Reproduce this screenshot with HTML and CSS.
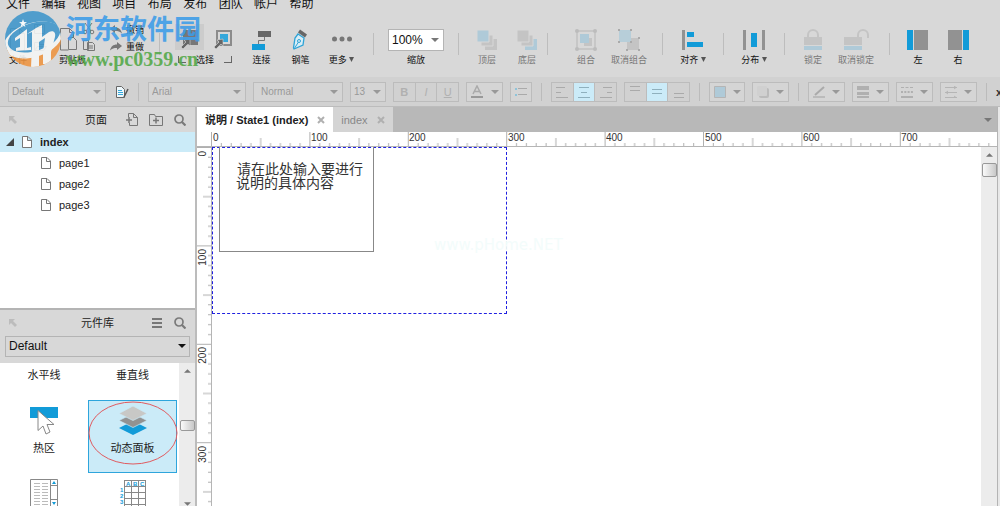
FILE: index.html
```html
<!DOCTYPE html>
<html lang="zh-CN">
<head>
<meta charset="utf-8">
<title>说明 / State1 (index)</title>
<link rel="stylesheet" href="styles.css">
</head>
<body>
<svg class="defs" width="0" height="0" aria-hidden="true">
  <defs>
    <symbol id="page" viewBox="0 0 10 12"><path d="M.5.5h5.5l3.500 3.500v7.500h-9zM5.500.5v4h4" fill="#fff" stroke="#777"/></symbol>
    <symbol id="caret" viewBox="0 0 8 4"><path d="M0 0h8l-4 4z" fill="currentColor"/></symbol>
    <symbol id="search" viewBox="0 0 12 12"><circle cx="5" cy="5" r="4" fill="none" stroke="#7a7a7a" stroke-width="1.700"/><path d="M8 8l3.500 3.500" stroke="#7a7a7a" stroke-width="2.200"/></symbol>
    <symbol id="dock" viewBox="0 0 8 8"><path d="M0 0h6L4 2l4 4-2 2-4-4-2 2z" fill="#bcbcbc"/></symbol>
    <symbol id="close" viewBox="0 0 8 8"><path d="M1 1l6 6M7 1L1 7" stroke="#b0b0b0" stroke-width="2"/></symbol>
  </defs>
</svg>

<nav class="menu">
  <a href="#">文件</a><a href="#">编辑</a><a href="#">视图</a><a href="#">项目</a><a href="#">布局</a><a href="#">发布</a><a href="#">团队</a><a href="#">帐户</a><a href="#">帮助</a>
</nav>

<div class="toolbar">
  <button class="tool file">
    <svg width="38" height="32" viewBox="0 0 38 32" fill="none" stroke="#888"><path d="M1.500 9.500h9l5 5v17h-14zM10.500 9.500v5h5M25.500 5.500h10v9h-10zM28.500 5.500v3h5v-3M25.500 31.500v-8h4l1 2h5v2M25.500 31.500l3-4h9l-3 4z"/></svg>
    <span>文件</span>
  </button>
  <button class="tool clip">
    <svg width="36" height="32" viewBox="0 0 36 32" fill="none" stroke="#777"><path d="M9.500 31H1.500V9.500h9l4 4V19M10.500 9.500v4h4M9.500 18.500h5l3 3v9h-8z"/><path d="M26 4l6 8M33 4l-6 8M24.500 21.500h5v9h-5zM28.500 23.500h5l2 2v6h-7zM30 27h4M30 29h4"/><circle cx="26" cy="13" r="1.800"/><circle cx="33" cy="13" r="1.800"/></svg>
    <span>剪贴板</span>
  </button>
  <div class="history">
    <button><svg width="12" height="10" viewBox="0 0 12 10"><path d="M0 4l5-4v2.500c4 0 6 2 7 6-2-2-4-2.500-7-2.500V8z" fill="#777"/></svg><span>撤销</span></button>
    <button><svg width="12" height="10" viewBox="0 0 12 10"><path d="M12 4L7 0v2.500c-4 0-6 2-7 6 2-2 4-2.500 7-2.500V8z" fill="#777"/></svg><span>重做</span></button>
  </div>
  <i class="sep"></i>
  <button class="tool pick">
    <svg width="60" height="28" viewBox="0 0 60 28"><path d="M0 1h29v26H0z" fill="#ccc"/><path d="M8 7h15v15H8z" fill="#777"/><path d="M8 15h15" stroke="#bbb"/><path d="M42 8h14v14H42z" fill="#d8d8d8" stroke="#8b8b8b" stroke-width="2"/><path d="M45 11h8v8h-8z" fill="#35a8db"/><path d="M15 16v7l-2-2-5 5-2-2 5-5-2-2zM48 16v7l-2-2-5 5-2-2 5-5-2-2z" fill="#666" stroke="#d8d8d8" stroke-width=".6"/></svg>
    <span class="bracket">选择</span>
  </button>
  <button class="tool w39">
    <svg width="20" height="22" viewBox="0 0 20 22"><path d="M6 2h13v6H6z" fill="#666"/><path d="M0 15h13v6H0z" fill="#129bd8"/><path d="M12.500 8v3.500h-6V15" fill="none" stroke="#777"/></svg>
    <span>连接</span>
  </button>
  <button class="tool w39">
    <svg width="18" height="22" viewBox="0 0 18 22"><path d="M6 5l6 4-1 7-9 4-.500-1L3 9z" fill="#d8eef7" stroke="#2fa3d6" stroke-width="1.300"/><path d="M2 20l4.500-7" stroke="#2fa3d6"/><circle cx="7" cy="12" r="1.500" fill="#d8eef7" stroke="#2fa3d6"/><path d="M7 2l7 5" stroke="#666" stroke-width="3.500"/></svg>
    <span>钢笔</span>
  </button>
  <button class="tool w43">
    <svg width="20" height="22" viewBox="0 0 20 22" fill="#777"><circle cx="2.500" cy="10" r="2.500"/><circle cx="10" cy="10" r="2.500"/><circle cx="17.500" cy="10" r="2.500"/></svg>
    <span>更多 <svg class="drop" width="5" height="5" viewBox="0 0 5 5"><path d="M0 0h5L2.500 5z" fill="#555"/></svg></span>
  </button>
  <i class="sep gap"></i>
  <label class="tool w84 zoom">
    <span class="pickbox"><select><option>100%</option></select><svg width="8" height="4"><use href="#caret"/></svg></span>
    <span>缩放</span>
  </label>
  <i class="sep"></i>
  <button class="tool w40 off lead">
    <svg width="20" height="22" viewBox="0 0 20 22"><path d="M8 10h12v11H8z" fill="#c4c4c4"/><path d="M4 6h12v11H4z" fill="#c4c4c4" stroke="#d8d8d8"/><path d="M0 1h12v12H0z" fill="#afcad8" stroke="#d8d8d8"/></svg>
    <span>顶层</span>
  </button>
  <button class="tool w40 off">
    <svg width="20" height="22" viewBox="0 0 20 22"><path d="M8 10h12v11H8z" fill="#afcad8"/><path d="M4 6h12v11H4z" fill="#c4c4c4" stroke="#d8d8d8"/><path d="M0 1h12v12H0z" fill="#c4c4c4" stroke="#d8d8d8"/></svg>
    <span>底层</span>
  </button>
  <i class="sep"></i>
  <button class="tool w40 off gap">
    <svg width="22" height="22" viewBox="0 0 22 22"><path d="M2 2h18v18H2z" fill="none" stroke="#c1c1c1" stroke-width="1.500"/><g fill="#bcbcbc"><circle cx="2" cy="2" r="2"/><circle cx="20" cy="2" r="2"/><circle cx="2" cy="20" r="2"/><circle cx="20" cy="20" r="2"/></g><path d="M9 9h8v8H9z" fill="#c4c4c4"/><path d="M5 5h9v9H5z" fill="#afcad8"/></svg>
    <span>组合</span>
  </button>
  <button class="tool w46 off">
    <svg width="22" height="22" viewBox="0 0 22 22"><path d="M9 9h12v12H9z" fill="#c4c4c4"/><path d="M1 1h12v12H1z" fill="#b7ced9"/><path d="M0 0h2v2H0zM12 0h2v2h-2zM0 12h2v2H0zM12 12h2v2h-2zM20 8h2v2h-2zM8 20h2v2H8zM20 20h2v2h-2z" fill="#aaa"/></svg>
    <span>取消组合</span>
  </button>
  <i class="sep gap"></i>
  <button class="tool w60">
    <svg width="22" height="22" viewBox="0 0 22 22"><path d="M0 1h3v20H0z" fill="#929292"/><path d="M5 3h7v5H5zM5 13h16v5H5z" fill="#129bd8"/></svg>
    <span>对齐 <svg class="drop" width="5" height="5" viewBox="0 0 5 5"><path d="M0 0h5L2.500 5z" fill="#555"/></svg></span>
  </button>
  <i class="sep"></i>
  <button class="tool w60">
    <svg width="22" height="22" viewBox="0 0 22 22"><path d="M0 1h3v20H0zM19 1h3v20h-3z" fill="#929292"/><path d="M8 4h6v14H8z" fill="#129bd8"/></svg>
    <span>分布 <svg class="drop" width="5" height="5" viewBox="0 0 5 5"><path d="M0 0h5L2.500 5z" fill="#555"/></svg></span>
  </button>
  <i class="sep"></i>
  <button class="tool w40 off lead">
    <svg width="18" height="22" viewBox="0 0 18 22"><path d="M4 9V6a5 5 0 0 1 10 0v3" fill="none" stroke="#c4c4c4" stroke-width="2"/><path d="M0 8h18v8H0z" fill="#c4c4c4"/><path d="M0 17h18v4H0z" fill="#afcad8"/></svg>
    <span>锁定</span>
  </button>
  <button class="tool w46 off">
    <svg width="26" height="22" viewBox="0 0 26 22"><path d="M15 9V6a5 5 0 0 1 10 0v3" fill="none" stroke="#c4c4c4" stroke-width="2"/><path d="M1 8h18v8H1z" fill="#c4c4c4"/><path d="M1 17h18v4H1z" fill="#afcad8"/></svg>
    <span>取消锁定</span>
  </button>
  <i class="sep gap"></i>
  <button class="tool w40 lead">
    <svg width="22" height="22" viewBox="0 0 22 22"><path d="M0 1h6v20H0z" fill="#129bd8"/><path d="M7 1h14v20H7z" fill="#929292"/></svg>
    <span>左</span>
  </button>
  <button class="tool w40">
    <svg width="22" height="22" viewBox="0 0 22 22"><path d="M16 1h6v20h-6z" fill="#129bd8"/><path d="M1 1h14v20H1z" fill="#929292"/></svg>
    <span>右</span>
  </button>
  <div class="mark" aria-hidden="true">
    <svg width="60" height="60" viewBox="0 0 60 60">
      <clipPath id="disc"><circle cx="29" cy="30" r="28"/></clipPath>
      <g clip-path="url(#disc)">
        <path d="M0 0h60v30L0 44z" fill="#3e96cb"/>
        <path d="M0 40l60-14v34H0z" fill="#ee9440"/>
        <ellipse cx="29" cy="31" rx="30" ry="17" transform="rotate(-17 29 31)" fill="#f5f6f5"/>
        <ellipse cx="30" cy="28" rx="27" ry="14" transform="rotate(-17 30 28)" fill="#3e96cb"/>
        <path d="M11 29l12-9v19l4-1v3l-15 1v-3l4-1V29l-5 3z" fill="#f5f6f5"/>
        <path d="M32 19l6-3v12l7-5c5-2 7 1 6 5l-4 15v12h-8V43l2-14-6 4v25h-8l1-22V23l-5 2z" fill="#f5f6f5"/>
      </g>
      <path d="M19 10l1 3 3 .2-2.500 1.800.9 3-2.400-1.800-2.400 1.800.9-3L15 13.200l3-.2z" fill="#fff"/>
    </svg>
    <div class="markText"><strong>河东软件园</strong><em>www.pc0359.cn</em></div>
  </div>
</div>

<div class="format">
  <span class="pickbox w98"><select aria-label="样式" disabled><option>Default</option></select><svg width="8" height="4"><use href="#caret"/></svg></span>
  <button class="styleEdit" aria-label="编辑样式"><svg width="14" height="14" viewBox="0 0 14 14"><path d="M1.500 1.500h5l3 3v8h-8z" fill="#eef8fc" stroke="#666"/><path d="M3 5.500h4M3 7.500h5M3 9.500h5" stroke="#35a8db"/><path d="M13 4l-4 8" stroke="#555" stroke-width="1.500"/></svg></button>
  <i class="bar"></i>
  <span class="pickbox w98"><select aria-label="字体" disabled><option>Arial</option></select><svg width="8" height="4"><use href="#caret"/></svg></span>
  <span class="pickbox w90"><select aria-label="字形" disabled><option>Normal</option></select><svg width="8" height="4"><use href="#caret"/></svg></span>
  <span class="pickbox w36"><select aria-label="字号" disabled><option>13</option></select><svg width="8" height="4"><use href="#caret"/></svg></span>
  <div class="seg"><button><b>B</b></button><button><em>I</em></button><button><u>U</u></button></div>
  <button class="opt w37"><svg width="14" height="14" viewBox="0 0 14 14"><path d="M3 9l4-8 4 8M4.500 6.500h5" fill="none" stroke="#aaa" stroke-width="1.500"/><path d="M1 11h12v2H1z" fill="#999"/></svg><svg width="8" height="4"><use href="#caret"/></svg></button>
  <button class="opt w22"><svg width="12" height="10" viewBox="0 0 12 10"><path d="M0 2h2M0 8h2" stroke="#8fc4da" stroke-width="2"/><path d="M3 1.500h9M3 7.500h9" stroke="#aaa"/></svg></button>
  <i class="bar"></i>
  <div class="seg">
    <button><svg width="12" height="12" viewBox="0 0 12 12" stroke="#aaa"><path d="M0 1.500h9M0 6.500h5M0 11.500h12"/></svg></button>
    <button class="on"><svg width="12" height="12" viewBox="0 0 12 12" stroke="#8fb0bd"><path d="M1 1.500h10M3 6.500h6M0 11.500h12"/></svg></button>
    <button><svg width="12" height="12" viewBox="0 0 12 12" stroke="#aaa"><path d="M3 1.500h9M7 6.500h5M0 11.500h12"/></svg></button>
  </div>
  <div class="seg">
    <button><svg width="10" height="14" viewBox="0 0 10 14" stroke="#aaa"><path d="M0 1.500h10M0 5.500h10"/></svg></button>
    <button class="on"><svg width="10" height="14" viewBox="0 0 10 14" stroke="#8fb0bd"><path d="M0 4.500h10M0 8.500h10"/></svg></button>
    <button><svg width="10" height="14" viewBox="0 0 10 14" stroke="#aaa"><path d="M0 8.500h10M0 12.500h10"/></svg></button>
  </div>
  <i class="bar"></i>
  <button class="opt w36"><svg width="12" height="12" viewBox="0 0 12 12"><path d="M.5.5h11v11H.5z" fill="#afcad8" stroke="#b5b5b5"/></svg><svg width="8" height="4"><use href="#caret"/></svg></button>
  <button class="opt w37"><svg width="12" height="12" viewBox="0 0 12 12"><rect x="2" y="2" width="10" height="10" rx="2" fill="#bbb"/><rect width="10" height="10" rx="1" fill="#d0d0d0"/></svg><svg width="8" height="4"><use href="#caret"/></svg></button>
  <i class="bar"></i>
  <button class="opt w37"><svg width="12" height="12" viewBox="0 0 12 12"><path d="M2 9l9-8" stroke="#aaa" stroke-width="2"/><path d="M0 11h12" stroke="#bbb" stroke-width="2"/></svg><svg width="8" height="4"><use href="#caret"/></svg></button>
  <button class="opt w37"><svg width="12" height="12" viewBox="0 0 12 12" stroke="#b0b0b0"><path d="M0 2h12" stroke-width="4"/><path d="M0 7.500h12" stroke-width="3"/><path d="M0 11h12" stroke-width="2"/></svg><svg width="8" height="4"><use href="#caret"/></svg></button>
  <button class="opt w37"><svg width="12" height="12" viewBox="0 0 12 12" stroke="#b0b0b0"><path d="M0 1.500h12" stroke-dasharray="3 1.500"/><path d="M0 6h12" stroke-width="2" stroke-dasharray="2 1.300"/><path d="M0 11h12" stroke-width="2"/></svg><svg width="8" height="4"><use href="#caret"/></svg></button>
  <button class="opt w37"><svg width="12" height="12" viewBox="0 0 12 12" stroke="#b5b5b5" fill="none"><path d="M0 1.500h12M0 6.500h12M0 11.500h12M9 0l2 1.500L9 3M3 5L1 6.500 3 8M9 10l2 1.500"/></svg><svg width="8" height="4"><use href="#caret"/></svg></button>
  <i class="bar"></i>
  <b class="axis">x</b>
</div>

<div class="work">
  <aside class="side">
    <section class="pages">
      <header class="head">
        <svg width="8" height="8"><use href="#dock"/></svg>
        <h2>页面</h2>
        <button aria-label="添加页面"><svg width="12" height="13" viewBox="0 0 12 13" fill="none" stroke="#777"><path d="M2.500 4V.5h5l4 4v8h-8V10M7.500.5v4h4"/><path d="M0 7h6M3 4v6" stroke-width="1.500"/></svg></button>
        <button aria-label="添加文件夹"><svg width="14" height="13" viewBox="0 0 14 13" fill="none" stroke="#777"><path d="M.5 12.500V1.500h5l1 2h7v9z"/><path d="M4 7.500h6M7 4.500v6" stroke-width="1.500"/></svg></button>
        <button aria-label="搜索页面"><svg width="12" height="12"><use href="#search"/></svg></button>
      </header>
      <ul class="tree">
        <li class="root"><svg width="8" height="8" viewBox="0 0 8 8"><path d="M8 0v8H0z" fill="#444"/></svg><svg width="10" height="12"><use href="#page"/></svg>index</li>
        <li><svg width="10" height="12"><use href="#page"/></svg>page1</li>
        <li><svg width="10" height="12"><use href="#page"/></svg>page2</li>
        <li><svg width="10" height="12"><use href="#page"/></svg>page3</li>
      </ul>
    </section>
    <section class="library">
      <header class="head">
        <svg width="8" height="8"><use href="#dock"/></svg>
        <h2>元件库</h2>
        <button aria-label="菜单"><svg width="12" height="12" viewBox="0 0 12 12" stroke="#777" stroke-width="2"><path d="M1 2h10M1 6h10M1 10h10"/></svg></button>
        <button aria-label="搜索元件"><svg width="12" height="12"><use href="#search"/></svg></button>
      </header>
      <div class="libPick"><span class="pickbox"><select aria-label="元件库"><option>Default</option></select><svg width="8" height="4"><use href="#caret"/></svg></span></div>
      <div class="shelf">
        <div class="widgets">
          <div class="widget top">水平线</div>
          <div class="widget top">垂直线</div>
          <div class="widget"><svg width="28" height="30" viewBox="0 0 28 30"><path d="M0 2h28v11H0z" fill="#129bd8"/><path d="M8 5.500v20l5-4.500 3 8 4-2-3-7.500h7z" fill="#fff" stroke="#888"/></svg>热区</div>
          <div class="widget chosen"><svg width="28" height="30" viewBox="0 0 28 30"><path d="M14 16l14 7-14 7-14-7z" fill="#129bd8"/><path d="M14 8.500l14 7-14 7-14-7z" fill="#929292" stroke="#cbebf8" stroke-width=".7"/><path d="M14 1l14 7.500-14 7-14-7z" fill="#c8c8c6" stroke="#cbebf8" stroke-width=".7"/></svg>动态面板
            <svg class="ring" viewBox="0 0 90 64"><ellipse cx="45" cy="32" rx="44" ry="31" fill="none" stroke="#e05b60"/></svg>
          </div>
          <div class="widget"><svg width="28" height="30" viewBox="0 0 28 30"><path d="M.5 1.500h27V32H.5zM20.500 1.500V32" fill="#fff" stroke="#888"/><path d="M4 5.500h6m2 0h6M4 8.500h6m2 0h6M4 11.500h6m2 0h6M4 14.500h6m2 0h6M4 17.500h6m2 0h6M4 20.500h6m2 0h6M4 23.500h6m2 0h6M4 26.500h6m2 0h6" stroke="#bbb"/><path d="M21 7.500h6M21 21.500h6" stroke="#888"/><path d="M22 6l2-3 2 3zM22 24h4l-2 3z" fill="#129bd8"/></svg></div>
          <div class="widget"><svg width="28" height="30" viewBox="0 0 28 30"><path d="M6 2.500h21M6 8.500h21M6 14.500h21M6 20.500h21M6 26.500h21M5.500 2v28M12.500 2v28M19.500 2v28M26.500 2v28" stroke="#888"/><g class="cellText"><text x="7" y="8">A</text><text x="14" y="8">B</text><text x="21" y="8">C</text><text x="1" y="14">1</text><text x="1" y="20">2</text><text x="1" y="26">3</text></g></svg></div>
        </div>
        <div class="scroll"><svg width="7" height="4" viewBox="0 0 8 4"><path d="M0 4h8L4 0z" fill="#777"/></svg><i class="thumb"></i><svg width="7" height="4"><use href="#caret"/></svg></div>
      </div>
    </section>
  </aside>

  <main class="editor">
    <div class="tabs">
      <button class="tab current">说明 / State1 (index)<svg width="8" height="8"><use href="#close"/></svg></button>
      <button class="tab">index<svg width="8" height="8"><use href="#close"/></svg></button>
      <svg class="more" width="8" height="4"><use href="#caret"/></svg>
    </div>
    <svg class="rulerX" aria-label="水平标尺">
      <defs><pattern id="tx" x="14" width="98.400" height="15" patternUnits="userSpaceOnUse"><path d="M.5 0v15M49.700 6v9M10.300 11v4M20.200 11v4M30 11v4M39.900 11v4M59.500 11v4M69.400 11v4M79.200 11v4M89.100 11v4" stroke="#b0b0b0"/></pattern></defs>
      <rect x="14" width="100%" height="15" fill="url(#tx)"/>
      <path d="M0 14.500h2000" stroke="#b5b5b5"/>
      <text x="16" y="9">0</text><text x="114" y="9">100</text><text x="212" y="9">200</text><text x="311" y="9">300</text><text x="409" y="9">400</text><text x="508" y="9">500</text><text x="606" y="9">600</text><text x="704" y="9">700</text>
    </svg>
    <div class="plane">
      <svg class="rulerY" aria-label="垂直标尺">
        <defs><pattern id="ty" width="15" height="98.400" patternUnits="userSpaceOnUse"><path d="M0 .5h15M6 49.700h9M11 10.300h4M11 20.200h4M11 30h4M11 39.900h4M11 59.500h4M11 69.400h4M11 79.200h4M11 89.100h4" stroke="#b0b0b0"/></pattern></defs>
        <rect width="15" height="100%" fill="url(#ty)"/>
        <path d="M14.500 0v2000" stroke="#b5b5b5"/>
        <g text-anchor="end"><text transform="translate(9 4) rotate(-90)">0</text><text transform="translate(9 102) rotate(-90)">100</text><text transform="translate(9 200) rotate(-90)">200</text><text transform="translate(9 299) rotate(-90)">300</text></g>
      </svg>
      <div class="canvas">
        <div class="state"><div class="note"><p>请在此处输入要进行</p><p class="second">说明的具体内容</p></div></div>
        <span class="faint" aria-hidden="true">www.pHome.NET</span>
      </div>
      <div class="scroll"><svg width="7" height="4" viewBox="0 0 8 4"><path d="M0 4h8L4 0z" fill="#777"/></svg><i class="thumb"></i></div>
    </div>
  </main>
  <div class="edge"><i></i></div>
</div>
</body>
</html>
```
FILE: styles.css
```css
* { box-sizing: border-box; }
body {
  margin: 0;
  height: 100vh;
  display: flex;
  flex-direction: column;
  overflow: hidden;
  background: #d8d8d8;
  color: #222;
  font: 11px/16px "Liberation Sans", "Noto Sans CJK SC", sans-serif;
}
svg { display: block; flex: none; }
.defs { position: absolute; }
button, select {
  appearance: none;
  margin: 0;
  padding: 0;
  border: 0;
  background: none;
  color: inherit;
  font: inherit;
  opacity: 1;
}
h2, p, ul { margin: 0; padding: 0; font: inherit; list-style: none; }

/* menu */
.menu {
  flex: none;
  display: grid;
  grid-template-columns: repeat(9, 1fr);
  grid-template-rows: 12px;
  align-items: end;
  width: 319px;
  height: 12px;
  margin-left: 6px;
  font-size: 12px;
}
.menu a { color: #111; text-decoration: none; white-space: nowrap; }

/* main toolbar */
.toolbar {
  position: relative;
  flex: none;
  display: flex;
  height: 65px;
  padding-bottom: 9px;
  align-items: flex-end;
}
.tool {
  flex: none;
  display: flex;
  flex-direction: column;
  align-items: center;
  gap: 1px;
  font-size: 9px;
  line-height: 16px;
  color: #111;
  white-space: nowrap;
}
.off { color: #777; }
.file, .clip { align-items: flex-start; }
.file { width: 59px; padding-left: 9px; }
.clip { width: 51px; }
.pick { width: 82px; padding-left: 8px; }
.w39 { width: 39px; }
.w40 { width: 40px; }
.w43 { width: 43px; }
.w46 { width: 46px; }
.w60 { width: 60px; }
.w84 { width: 84px; }
.lead { margin-left: 8px; }
.drop { display: inline-block; vertical-align: 1px; }
.history {
  width: 49px;
  padding-bottom: 13px;
  font-size: 9px;
}
.history button { display: flex; align-items: center; gap: 4px; height: 17px; color: #111; }
.sep { flex: none; width: 1px; height: 22px; margin-bottom: 13px; background: #bdbdbd; }
.sep.gap { margin-left: 10px; }
.tool.gap { margin-left: 18px; }
.bracket { width: 54px; position: relative; }
.bracket::before, .bracket::after {
  content: "";
  position: absolute;
  bottom: 5px;
  width: 7px;
  height: 6px;
  border: solid #666;
  border-width: 0 0 1px 1px;
  left: 0;
}
.bracket::after { left: auto; right: 0; border-width: 0 1px 1px 0; }
.pickbox {
  flex: none;
  display: flex;
  align-items: center;
  height: 20px;
  padding: 0 4px 0 3px;
  border: 1px solid #b4b4b4;
}
.pickbox select { flex: 1; min-width: 0; outline: 0; text-overflow: clip; }
.zoom .pickbox { width: 56px; height: 22px; background: #fff; font-size: 12px; }
.zoom .pickbox svg { color: #777; }

/* watermark */
.mark {
  position: absolute;
  left: 4px;
  top: -3px;
  display: flex;
  gap: 2px;
  opacity: .88;
  pointer-events: none;
}
.markText { display: flex; flex-direction: column; }
.markText strong { font: 700 27px/38px "Noto Sans CJK SC", sans-serif; color: #3c9ce8; }
.markText em { font: 700 20px/24px "Liberation Serif", serif; color: #52a847; }

/* format bar */
.format {
  flex: none;
  display: flex;
  align-items: center;
  gap: 7px;
  height: 30px;
  padding-left: 8px;
  background: #d1d1d1;
  border-bottom: 1px solid #bcbcbc;
  color: #999;
  font-size: 10px;
}
.format .pickbox { background: #d5d5d5; border-color: #bcbcbc; }
.format .w98 { width: 98px; }
.format .w90 { width: 90px; padding-left: 7px; }
.w36 { width: 36px; }
.w37 { width: 37px; }
.w22 { width: 22px; }
.styleEdit { padding-left: 2px; width: 16px; }
.bar { flex: none; width: 1px; height: 18px; margin: 0 2px; background: #bbb; }
.seg { flex: none; display: flex; width: 66px; height: 20px; border: 1px solid #bcbcbc; font-size: 11px; }
.seg button { flex: 1; display: flex; align-items: center; justify-content: center; color: #b0b0b0; }
.seg button + button { border-left: 1px solid #bcbcbc; }
.seg .on { background: #cbebf8; }
.opt {
  flex: none;
  display: flex;
  align-items: center;
  justify-content: space-around;
  height: 20px;
  border: 1px solid #bcbcbc;
  background: #d5d5d5;
}
.axis { color: #333; font-size: 11px; }

/* work area */
.work { flex: 1; min-height: 0; display: flex; }
.side {
  flex: none;
  width: 197px;
  display: flex;
  flex-direction: column;
  border-right: 2px solid #bcbcbc;
  background: #fff;
}
.pages { flex: 202 1 0; min-height: 0; }
.library { flex: 197 1 0; min-height: 0; display: flex; flex-direction: column; border-top: 2px solid #b4b4b4; }
.head {
  flex: none;
  display: flex;
  align-items: center;
  gap: 11px;
  height: 25px;
  padding: 0 9px;
  background: #d8d8d8;
}
.head h2 { flex: 1; text-align: right; padding-right: 8px; }
.library .head { height: 26px; }
.library .head h2 { padding-right: 26px; }
.tree li { display: flex; align-items: center; gap: 8px; height: 21px; padding-left: 41px; }
.tree .root { height: 20px; padding-left: 6px; background: #cbebf8; font-weight: 700; }
.libPick { flex: none; padding: 0 5px 6px; background: #d8d8d8; }
.libPick .pickbox { height: 21px; font-size: 12px; color: #111; padding: 0 3px; }
.shelf { flex: 1; min-height: 0; display: flex; }
.widgets {
  flex: 1;
  display: grid;
  grid-template-columns: 88px 89px;
  grid-template-rows: 37px 73px 72px;
  overflow: hidden;
}
.widget {
  position: relative;
  display: flex;
  flex-direction: column;
  align-items: center;
  gap: 5px;
  padding-top: 5px;
}
.widget.top { padding-top: 4px; }
.chosen { background: #cbebf8; border: 1px solid #2ea5dc; padding-top: 4px; }
.ring { position: absolute; left: -1px; top: 0; width: 90px; height: 64px; }
.cellText { font: 700 6px "Liberation Sans", sans-serif; fill: #129bd8; }
.scroll {
  flex: none;
  display: flex;
  flex-direction: column;
  align-items: center;
  width: 16px;
  padding-top: 6px;
  background: #ececec;
  color: #777;
}
.thumb {
  width: 15px;
  height: 14px;
  margin-top: 6px;
  border: 1px solid #999;
  border-radius: 2px;
  background: linear-gradient(90deg, #fafafa, #c8c8c8);
}
.shelf .thumb { height: 11px; margin: 47px 0 auto; }

/* editor */
.editor { flex: 1; min-width: 0; display: flex; flex-direction: column; background: #fff; }
.tabs { flex: none; display: flex; height: 25px; background: #b8b8b8; color: #777; }
.tab { display: flex; align-items: center; gap: 9px; padding: 0 8px; background: #d4d4d4; color: #888; }
.tab.current { background: #fff; color: #222; font-weight: 700; }
.more { margin: auto 5px auto auto; }
.rulerX { width: 100%; height: 15px; }
.rulerX text, .rulerY text { font: 10px "Liberation Sans", sans-serif; fill: #333; }
.plane { flex: 1; min-height: 0; display: flex; }
.rulerY { width: 15px; height: 100%; }
.canvas { position: relative; flex: 1; min-width: 0; overflow: hidden; }
.state { width: 295px; height: 167px; padding-left: 6px; border: 1px dashed #2020e0; }
.note {
  width: 155px;
  height: 105px;
  margin-top: -1px;
  padding: 15px 0 0 17px;
  border: 1px solid #888;
  border-top: 0;
  color: #333;
  font-size: 14px;
  line-height: 14px;
  white-space: nowrap;
}
.note .second { margin-left: -1px; }
.faint { position: absolute; left: 222px; top: 88px; font: 15px/20px "DejaVu Sans", sans-serif; color: #f3fcfb; }
.edge { flex: none; width: 3px; padding: 64px 0 0 2px; border-left: 1px solid #b4b4b4; background: #e8e8e8; }
.edge i { display: block; height: 26px; background: #35a0cf; }
```
